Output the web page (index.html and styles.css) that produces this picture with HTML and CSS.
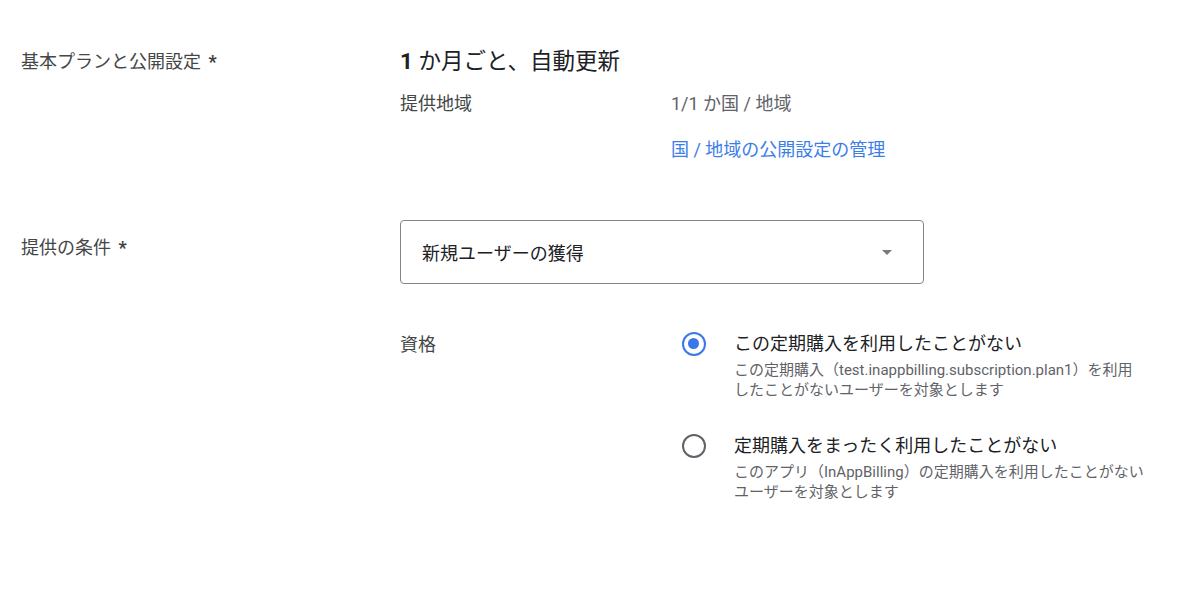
FILE: index.html
```html
<!DOCTYPE html>
<html lang="ja">
<head>
<meta charset="utf-8">
<link rel="stylesheet" href="styles.css">
</head>
<body>
<div class="page">
  <section class="row row-plan">
    <div class="label">基本プランと公開設定 <span class="req">*</span></div>
    <div class="content">
      <div class="title"><span class="num">1</span> か月ごと、自動更新</div>
      <div class="sub">
        <div class="sub-label">提供地域</div>
        <div class="sub-value">
          <div class="value">1/1 か国 / 地域</div>
          <a class="link" href="#">国 / 地域の公開設定の管理</a>
        </div>
      </div>
    </div>
  </section>

  <section class="row row-cond">
    <div class="label">提供の条件 <span class="req">*</span></div>
    <div class="content">
      <div class="select">
        <span class="select-text">新規ユーザーの獲得</span>
        <span class="arrow"></span>
      </div>
      <div class="sub sub-elig">
        <div class="sub-label">資格</div>
        <div class="options">
          <div class="option">
            <span class="radio checked"></span>
            <div class="opt-text">
              <div class="opt-title">この定期購入を利用したことがない</div>
              <div class="opt-desc">この定期購入（test.inappbilling.subscription.plan1）を利用したことがないユーザーを対象とします</div>
            </div>
          </div>
          <div class="option">
            <span class="radio"></span>
            <div class="opt-text">
              <div class="opt-title">定期購入をまったく利用したことがない</div>
              <div class="opt-desc">このアプリ（InAppBilling）の定期購入を利用したことがないユーザーを対象とします</div>
            </div>
          </div>
        </div>
      </div>
    </div>
  </section>
</div>
</body>
</html>
```

FILE: styles.css
```css
* { box-sizing: border-box; }
html, body { margin: 0; padding: 0; background: #fff; }
body {
  font-family: Roboto, "Noto Sans CJK JP", sans-serif;
  color: #444746;
  font-size: 18px;
}
.page {
  padding: 47px 0 0 21px;
}
.row {
  display: flex;
}
.label {
  width: 379px;
  flex: none;
  font-size: 18px;
  line-height: 24px;
  color: #444746;
}
.req { margin-left: 3px; font-weight: 700; color: #3c4043; }
.row-plan .label { padding-top: 3px; }
.content { flex: 1; }
.title {
  font-size: 22.5px;
  line-height: 28px;
  color: #202124;
  font-weight: 400;
}
.num { font-weight: 700; }
.sub {
  display: flex;
  margin-top: 17px;
}
.sub-label {
  width: 271px;
  flex: none;
  font-size: 18px;
  line-height: 24px;
  color: #444746;
}
.value {
  line-height: 24px;
  color: #5f6368;
}
.link {
  display: block;
  margin-top: 22px;
  line-height: 24px;
  color: #3b7ee8;
  text-decoration: none;
}
.row-cond { margin-top: 58px; }
.row-cond .label { padding-top: 16px; }
.select {
  width: 524px;
  height: 64px;
  border: 1px solid #80868b;
  border-radius: 4px;
  display: flex;
  align-items: center;
  justify-content: space-between;
  padding: 0 31px 0 21px;
}
.select-text { color: #202124; font-size: 18px; }
.arrow {
  width: 0; height: 0;
  border-left: 5px solid transparent;
  border-right: 5px solid transparent;
  border-top: 5px solid #7a7a7a;
  margin-top: 1px;
}
.sub-elig { margin-top: 48px; }
.sub-elig .sub-label { padding-top: 1px; }
.options {
  width: 500px;
  display: flex;
  flex-direction: column;
  gap: 34px;
}
.option {
  display: flex;
  align-items: flex-start;
}
.radio {
  flex: none;
  width: 24px;
  height: 24px;
  border: 2.5px solid #5f6368;
  border-radius: 50%;
  margin: 0 0 0 11px;
  position: relative;
}
.radio.checked { border-color: #3b78e7; }
.radio.checked::after {
  content: "";
  position: absolute;
  left: 4px; top: 4px;
  width: 11px; height: 11px;
  border-radius: 50%;
  background: #3b78e7;
}
.opt-text {
  margin-left: 28px;
  width: 411px;
}
.opt-title {
  font-size: 18px;
  line-height: 24px;
  color: #202124;
}
.opt-desc {
  margin-top: 4px;
  font-size: 15px;
  line-height: 20px;
  color: #5f6368;
}
```
